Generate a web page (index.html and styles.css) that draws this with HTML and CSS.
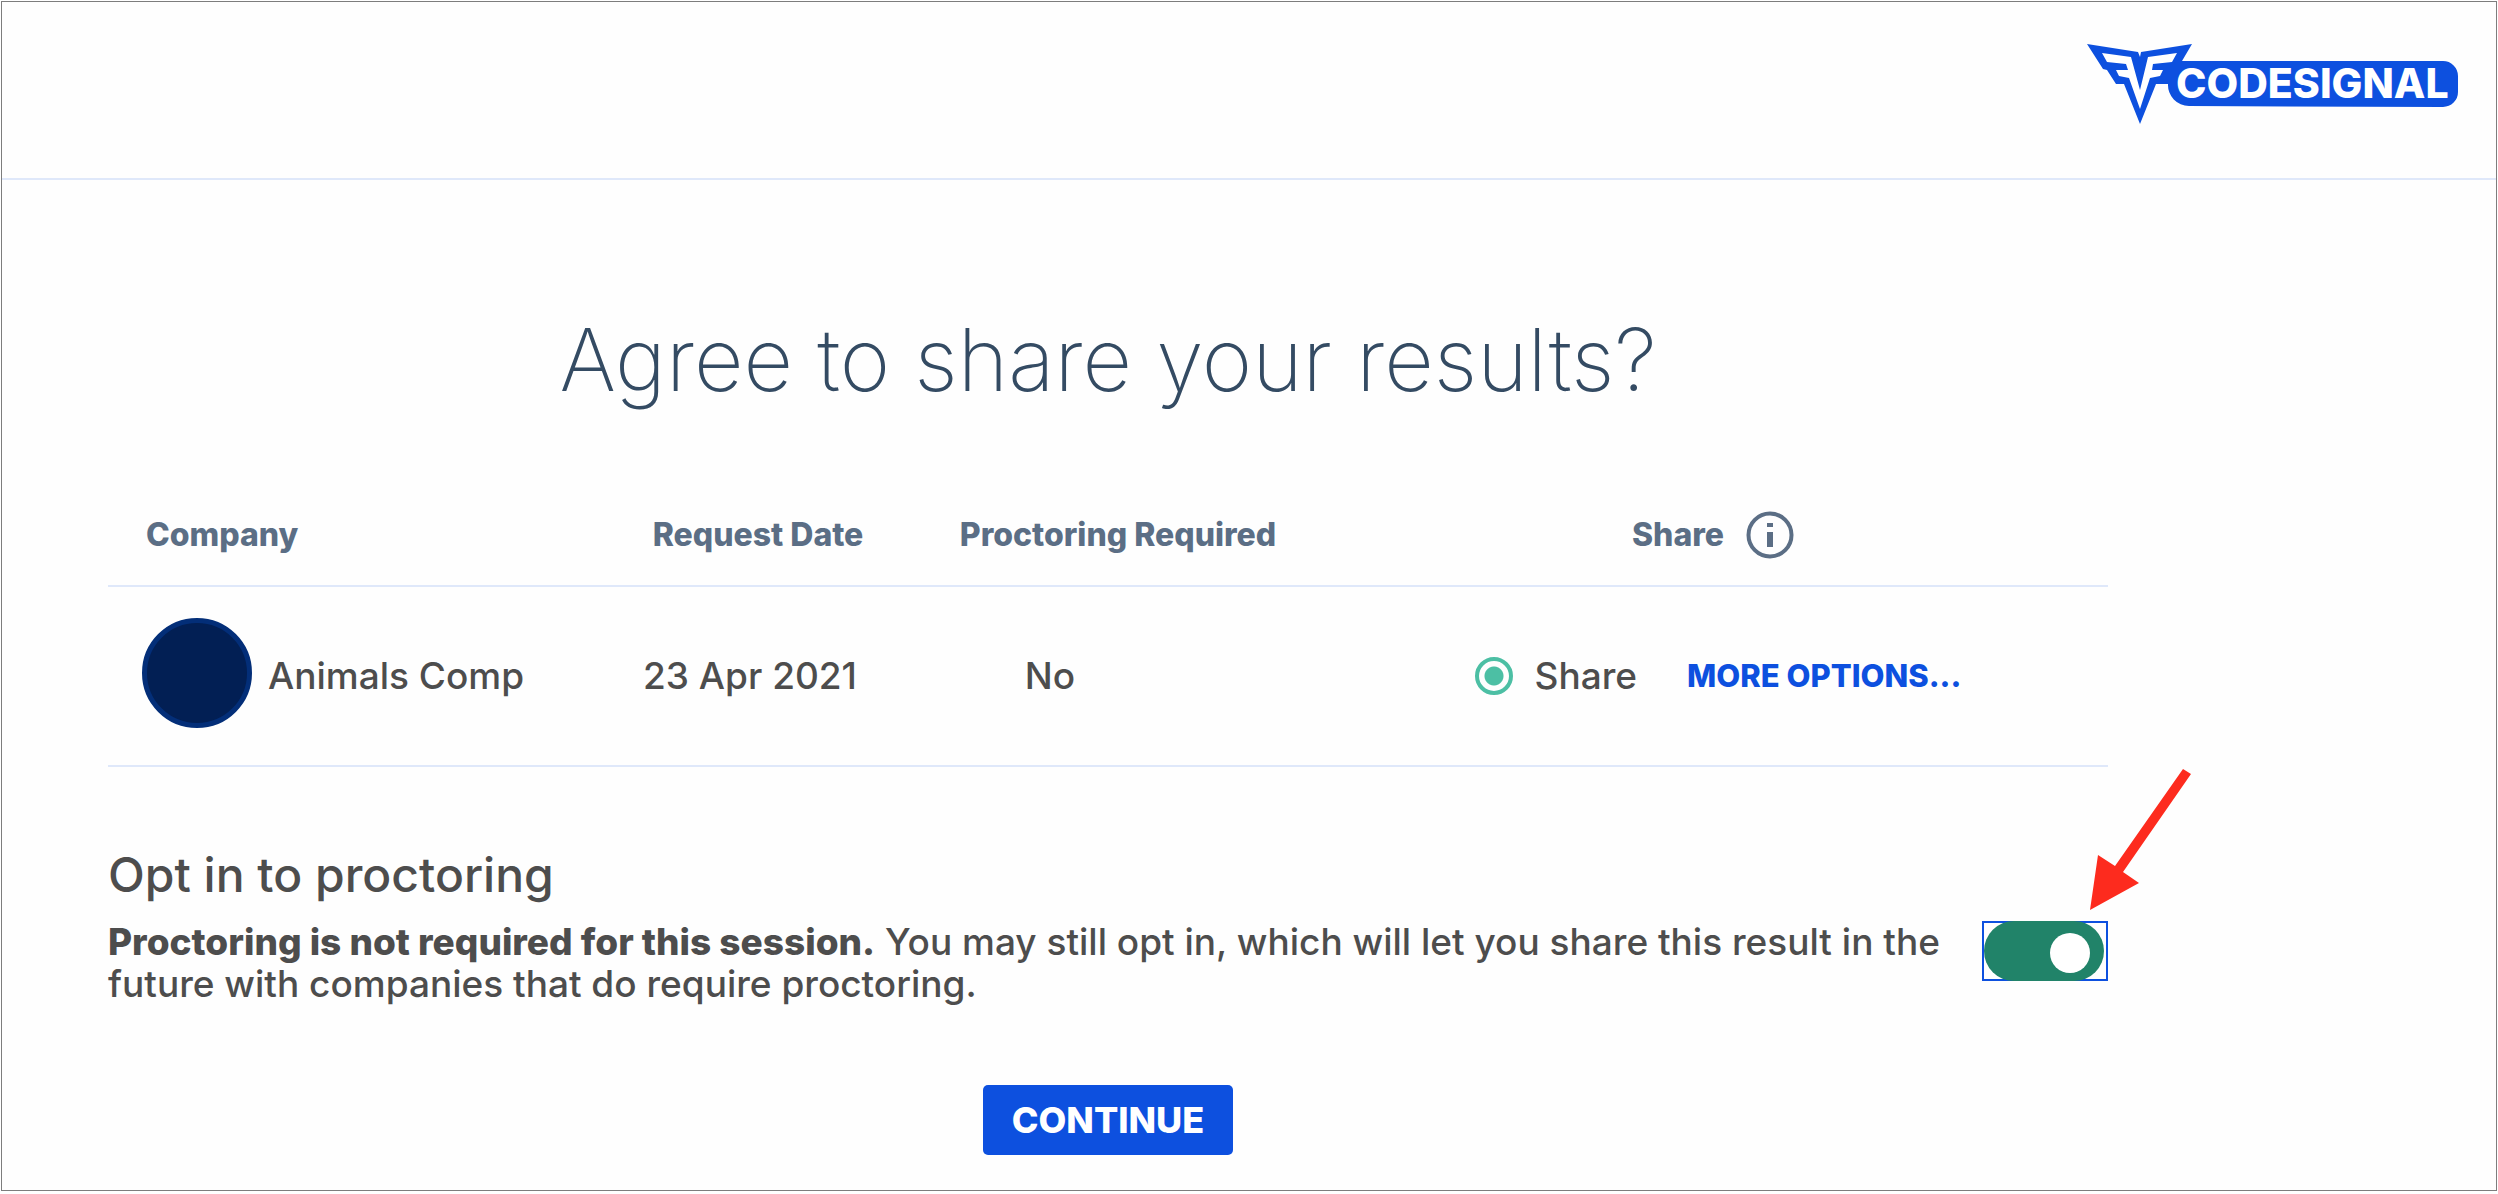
FILE: index.html
```html
<!DOCTYPE html>
<html lang="en">

<head>
    <meta charset="UTF-8">
    <meta name="viewport" content="width=device-width, initial-scale=1.0">
    <title>CodeSignal</title>
    <link rel="stylesheet" href="styles.css">
</head>

<body>
    <div class="page">
        <header class="header">
            <a href="#" class="logo" aria-label="CodeSignal">
                <svg width="372" height="80" viewBox="0 0 372 80">
                    <path class="logo-blue" d="M1 0L52 8L54 13L55 8L106 0L96 17H357A15 15 0 0 1 372 32V48A15 15 0 0 1 357 63L103 62A21 21 0 0 1 82 40L70 40L54 80L38 40L30 40L21 26L17 25Z" />
                    <path class="logo-white" d="M16 9L45 13L54 46L62 13L91 9L86 18L67 20L66 26L77 26L74 32L64 34L54 65L43 34L33 32L30 26L42 26L40 20L21 18Z" />
                    <text class="logo-text" x="90" y="54">CODESIGNAL</text>
                </svg>
            </a>
        </header>
        <main class="content">
            <h1 class="title">Agree to share your results?</h1>
            <table class="requests">
                <thead>
                    <tr>
                        <th class="col-company">Company</th>
                        <th class="col-date">Request Date</th>
                        <th class="col-proctoring">Proctoring Required</th>
                        <th class="col-share">
                            <div class="share-title">
                                <span>Share</span>
                                <svg width="48" height="48" viewBox="0 0 48 48">
                                    <circle cx="24" cy="24" r="21.5" fill="none" stroke="currentColor" stroke-width="4" />
                                    <path fill="currentColor" d="M21 12h6v4h-6zM21 21h6v15h-6z" />
                                </svg>
                            </div>
                        </th>
                    </tr>
                </thead>
                <tbody>
                    <tr>
                        <td>
                            <div class="company">
                                <span class="avatar"></span>
                                <span>Animals Comp</span>
                            </div>
                        </td>
                        <td class="date">23 Apr 2021</td>
                        <td class="required">No</td>
                        <td>
                            <div class="share">
                                <input type="radio" name="share" id="share" checked>
                                <label for="share">Share</label>
                                <a href="#" class="more">MORE OPTIONS...</a>
                            </div>
                        </td>
                    </tr>
                </tbody>
            </table>
            <section class="opt-in">
                <div class="opt-text">
                    <h2>Opt in to proctoring</h2>
                    <label for="proctoring"><b>Proctoring is not required for this session.</b> You may still opt in, which will let you share this result in the future with companies that do require proctoring.</label>
                </div>
                <input type="checkbox" class="toggle" id="proctoring" checked>
                <svg class="arrow" width="102" height="142" viewBox="0 0 102 142">
                    <path fill="#fd2b1e" d="M93 0L101 5L33 103L49 114L0 141L8 86L25 97Z" />
                </svg>
            </section>
            <button type="button" class="continue">CONTINUE</button>
        </main>
    </div>
</body>

</html>
```
FILE: styles.css
```css
* {
    box-sizing: border-box;
    padding: 0;
    margin: 0;
}

body {
    padding: 1px 1px 3px;
    font-family: Inter, "Liberation Sans", sans-serif;
    font-size: 37px;
    line-height: 42px;
    color: #4d4d4d;
    background-color: #fff;
}

.page {
    min-height: calc(100vh - 4px);
    border: 1px solid #7d7d7d;
    background-color: #fefefe;
}

.header {
    display: flex;
    justify-content: flex-end;
    height: 178px;
    padding: 42px 38px 0 0;
    border-bottom: 2px solid #dfe8fa;
}

.logo svg {
    display: block;
}

.logo-blue {
    fill: #0d50df;
}

.logo-white,
.logo-text {
    fill: #fff;
}

.logo-text {
    font-size: 41px;
    font-weight: 800;
}

.content {
    width: 100%;
    max-width: 2106px;
    padding-left: 106px;
}

.title {
    padding: 132px 0 86px;
    text-align: center;
    font-size: 86px;
    line-height: 96px;
    font-weight: 200;
    color: #344b63;
}

.requests {
    width: 100%;
    table-layout: fixed;
    border-collapse: collapse;
}

.requests tr {
    border-bottom: 2px solid #dfe8fa;
}

.requests th {
    height: 92px;
    padding-bottom: 10px;
    font-size: 32px;
    font-weight: 800;
    color: #5b6e85;
}

.requests td {
    height: 180px;
    font-weight: 500;
}

.requests .col-company {
    width: 25%;
    padding-left: 38px;
    text-align: left;
}

.col-date {
    width: 15%;
}

.col-proctoring {
    width: 21%;
}

.col-share {
    width: 39%;
}

.share-title,
.share {
    display: flex;
    align-items: center;
    justify-content: center;
}

.share-title {
    gap: 22px;
    padding-right: 10px;
}

.company {
    display: flex;
    align-items: center;
    gap: 16px;
    padding-left: 34px;
}

.avatar {
    width: 110px;
    height: 110px;
    margin-bottom: 6px;
    border: 5px solid #032e78;
    border-radius: 50%;
    background-color: #021f54;
}

.requests .date {
    padding-right: 16px;
    text-align: center;
}

.required {
    padding-right: 136px;
    text-align: center;
}

.share input {
    appearance: none;
    width: 38px;
    height: 38px;
    margin-right: 22px;
    border: 4px solid #4cbfa4;
    border-radius: 50%;
    background: radial-gradient(circle, #4cbfa4 9px, transparent 10px);
}

.more {
    margin-left: 50px;
    font-size: 31px;
    font-weight: 800;
    text-decoration: none;
    color: #0d50df;
}

.opt-in {
    position: relative;
    display: flex;
    align-items: flex-end;
    justify-content: space-between;
    padding-top: 84px;
}

.opt-text {
    max-width: 1864px;
    font-weight: 500;
}

.opt-text h2 {
    padding-bottom: 22px;
    font-size: 48px;
    line-height: 48px;
    font-weight: 500;
}

.opt-text b {
    font-weight: 800;
}

/* switch */
.toggle {
    appearance: none;
    position: relative;
    width: 126px;
    height: 60px;
    margin-bottom: 24px;
    border: 2px solid #0d50df;
}

.toggle::before {
    content: "";
    position: absolute;
    left: 0;
    top: -2px;
    width: 120px;
    height: 60px;
    border-radius: 30px;
    background-color: #218369;
}

.toggle::after {
    content: "";
    position: absolute;
    right: 16px;
    top: 10px;
    width: 40px;
    height: 40px;
    border-radius: 50%;
    background-color: #fff;
}

.arrow {
    position: absolute;
    right: -84px;
    top: 2px;
}

.continue {
    display: block;
    width: 250px;
    height: 70px;
    margin: 80px auto 0;
    border: 0;
    border-radius: 5px;
    font-family: inherit;
    font-size: 36px;
    font-weight: 800;
    color: #fff;
    background-color: #0d50df;
    cursor: pointer;
}
```
